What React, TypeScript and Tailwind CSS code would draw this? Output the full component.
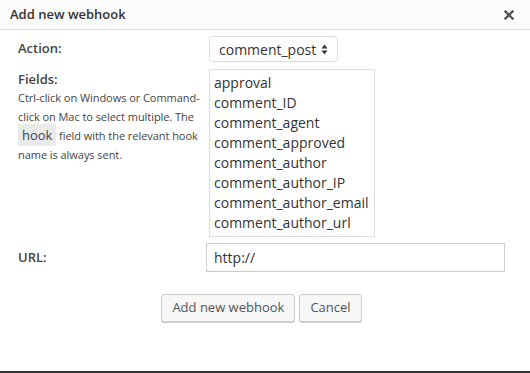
import { useState } from "react";

const FIELDS = [
  "approval",
  "comment_ID",
  "comment_agent",
  "comment_approved",
  "comment_author",
  "comment_author_IP",
  "comment_author_email",
  "comment_author_url",
];

export default function App() {
  const [url, setUrl] = useState("http://");

  return (
    <div className="w-[530px] h-[373px] bg-white flex flex-col text-[#444] font-['Open_Sans',sans-serif] border-b-2 border-[#333]">
      {/* Header */}
      <div className="h-[30px] shrink-0 flex items-center justify-between pl-[10px] pr-[16px] bg-[#fcfcfc] border-b border-[#ddd]">
        <span className="text-[13px] font-semibold text-[#333]">Add new webhook</span>
        <svg width="10" height="10" viewBox="0 0 10 10" className="text-[#555]">
          <path d="M1.5 1.5 L8.5 8.5 M8.5 1.5 L1.5 8.5" stroke="currentColor" strokeWidth="2.4" strokeLinecap="square" />
        </svg>
      </div>

      {/* Body */}
      <div className="flex flex-col pl-[18px] pt-[6px]">
        <div className="flex items-center">
          <div className="w-[188px] text-[13px] font-semibold">Action:</div>
          <div className="ml-[3px] w-[129px] h-[26px] flex items-center justify-between pl-[9px] pr-[9px] border border-[#ddd] rounded-[4px] text-[14px] text-[#333]">
            <span>comment_post</span>
            <svg width="7" height="11" viewBox="0 0 7 11">
              <path d="M3.5 0.5 L6.5 4.5 L0.5 4.5 Z M3.5 10.5 L6.5 6.5 L0.5 6.5 Z" fill="#333" />
            </svg>
          </div>
        </div>

        <div className="flex mt-[7px]">
          <div className="w-[188px] pt-[1px]">
            <div className="text-[13px] font-semibold leading-[18px]">Fields:</div>
            <p className="w-[188px] text-[11px] leading-[19px] text-[#444] tracking-[-0.05px]">
              Ctrl-click on Windows or Command-click on Mac to select multiple. The{" "}
              <code className="font-['Open_Sans',sans-serif] text-[13px] bg-[#eaeaea] px-[4px] py-[2px]">hook</code>{" "}
              field with the relevant hook name is always sent.
            </p>
          </div>
          <div className="ml-[3px] w-[166px] h-[168px] border border-[#ddd] pl-[4px] pt-[3px] text-[14px] leading-[20px] text-[#333]">
            {FIELDS.map(f => (
              <div key={f}>{f}</div>
            ))}
          </div>
        </div>

        <div className="flex items-center mt-[6px]">
          <div className="w-[188px] text-[13px] font-semibold">URL:</div>
          <input
            value={url}
            onChange={e => setUrl(e.target.value)}
            className="w-[299px] h-[29px] border border-[#ccc] px-[7px] text-[14px] text-[#333] outline-none font-['Open_Sans',sans-serif]"
          />
        </div>

        <div className="flex justify-center gap-[4px] mt-[22px] pr-[25px]">
          <button className="h-[28px] px-[10px] text-[13px] text-[#555] bg-[#f7f7f7] border border-[#ccc] rounded-[3px] shadow-[0_1px_0_#ccc]">
            Add new webhook
          </button>
          <button className="h-[28px] px-[10px] text-[13px] text-[#555] bg-[#f7f7f7] border border-[#ccc] rounded-[3px] shadow-[0_1px_0_#ccc]">
            Cancel
          </button>
        </div>
      </div>
    </div>
  );
}
